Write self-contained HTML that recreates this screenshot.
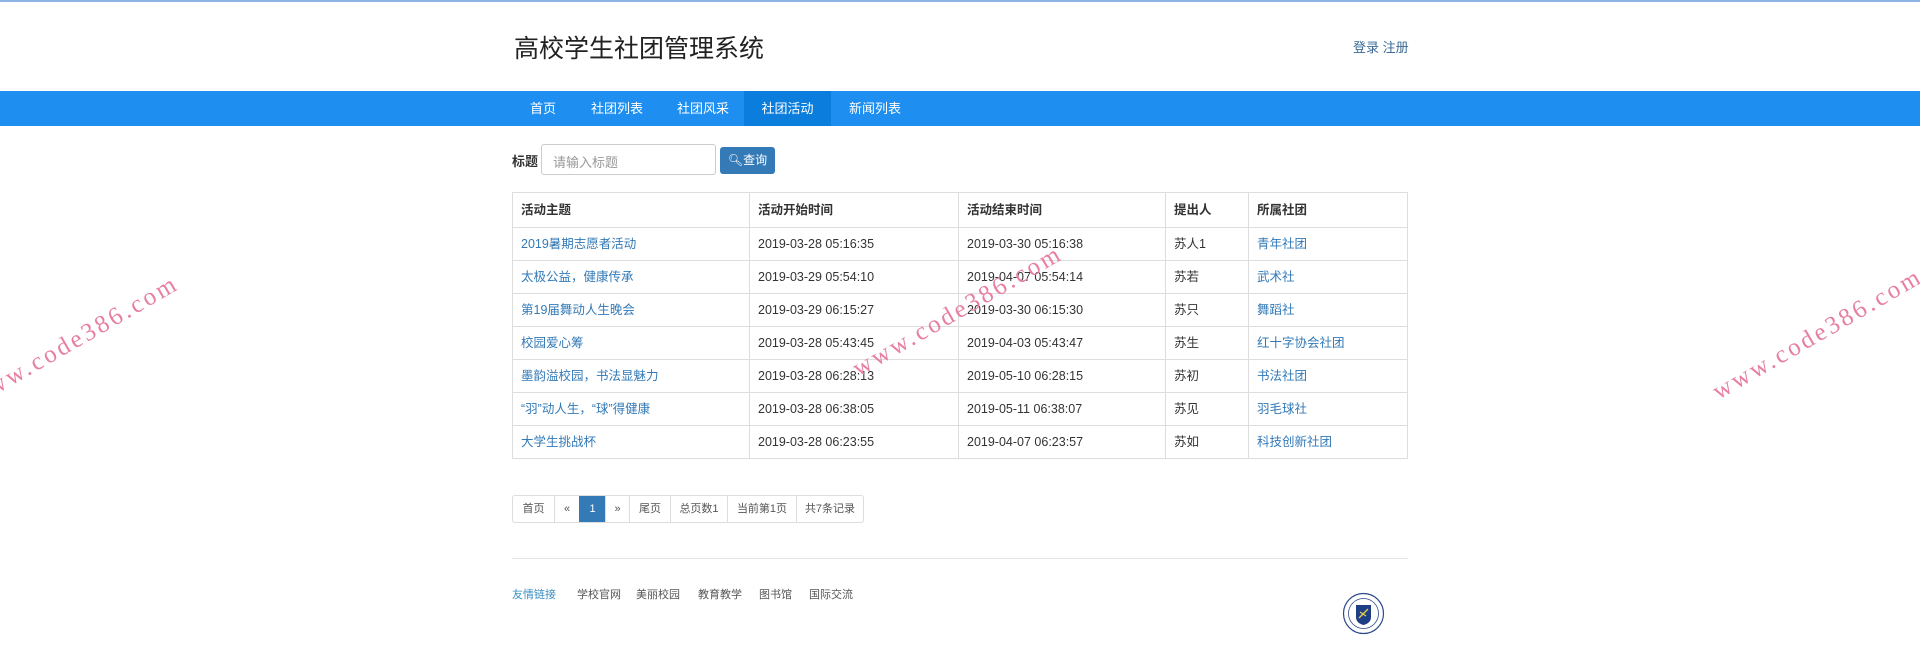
<!DOCTYPE html>
<html><head><meta charset="utf-8"><style>
*{box-sizing:border-box;margin:0;padding:0}
body{width:1920px;height:669px;overflow:hidden;background:#fff;font-family:"Liberation Sans","Noto Sans CJK SC",sans-serif;font-size:13px;color:#333;position:relative}
.topline{position:absolute;left:0;top:0;width:1920px;height:2px;background:#8db4e2}
.title{position:absolute;left:514px;top:29px;font-size:25px;color:#222}
.login{position:absolute;left:1353px;top:37px;font-size:13px;color:#3a6b96}
.nav{position:absolute;left:0;top:91px;width:1920px;height:35px;background:#1e8ff0}
.nav span{position:absolute;top:0;height:35px;line-height:35px;color:#fff;font-size:13px}
.nav .act{background:#0b7ddd;text-align:center}
.lbl{position:absolute;left:512px;top:151px;font-weight:bold;font-size:13px}
.inp{position:absolute;left:541px;top:144px;width:175px;height:31px;border:1px solid #ccc;border-radius:3px;color:#999;padding:7px 11px;font-size:13px}
.btn{position:absolute;left:720px;top:147px;width:55px;height:27px;background:#337ab7;border-radius:3px;color:#fff;font-size:12px;line-height:27px;text-align:center}
table{position:absolute;left:512px;top:192px;width:896px;border-collapse:collapse}
td,th{border:1px solid #ddd;padding:0 8px;text-align:left;font-size:12.5px;height:33px;line-height:14px;font-weight:normal;vertical-align:middle}
th{height:35px;font-weight:bold;color:#333}
td a{color:#337ab7}
.pg{position:absolute;left:512px;top:495px;height:28px;display:flex;border:1px solid #ddd;border-radius:3px;overflow:hidden}
.pg span{height:26px;line-height:26px;font-size:11px;color:#555;border-left:1px solid #ddd;text-align:center}
.pg span:first-child{border-left:none}
.pg .on{background:#337ab7;color:#fff;border-color:#337ab7}
.hr{position:absolute;left:512px;top:558px;width:896px;height:1px;background:#e5e5e5}
.ft{position:absolute;top:586px;font-size:11px;color:#555}
.wm{position:absolute;font-family:"Liberation Serif",serif;font-size:25px;letter-spacing:3px;color:#e77fa2;transform-origin:0 100%;transform:rotate(-30deg);white-space:nowrap}
</style></head><body>
<div class="topline"></div>
<div class="title">高校学生社团管理系统</div>
<div class="login">登录 注册</div>
<div class="nav">
<span style="left:530px">首页</span>
<span style="left:591px">社团列表</span>
<span style="left:677px">社团风采</span>
<span class="act" style="left:744px;width:87px">社团活动</span>
<span style="left:849px">新闻列表</span>
</div>
<div class="lbl">标题</div>
<div class="inp">请输入标题</div>
<div class="btn">&#x1F50D;&#xFE0E;查询</div>
<table>
<tr><th style="width:237px">活动主题</th><th style="width:209px">活动开始时间</th><th style="width:207px">活动结束时间</th><th style="width:83px">提出人</th><th>所属社团</th></tr>
<tr><td><a>2019暑期志愿者活动</a></td><td>2019-03-28 05:16:35</td><td>2019-03-30 05:16:38</td><td>苏人1</td><td><a>青年社团</a></td></tr>
<tr><td><a>太极公益，健康传承</a></td><td>2019-03-29 05:54:10</td><td>2019-04-07 05:54:14</td><td>苏若</td><td><a>武术社</a></td></tr>
<tr><td><a>第19届舞动人生晚会</a></td><td>2019-03-29 06:15:27</td><td>2019-03-30 06:15:30</td><td>苏只</td><td><a>舞蹈社</a></td></tr>
<tr><td><a>校园爱心筹</a></td><td>2019-03-28 05:43:45</td><td>2019-04-03 05:43:47</td><td>苏生</td><td><a>红十字协会社团</a></td></tr>
<tr><td><a>墨韵溢校园，书法显魅力</a></td><td>2019-03-28 06:28:13</td><td>2019-05-10 06:28:15</td><td>苏初</td><td><a>书法社团</a></td></tr>
<tr><td><a>“羽”动人生，“球”得健康</a></td><td>2019-03-28 06:38:05</td><td>2019-05-11 06:38:07</td><td>苏见</td><td><a>羽毛球社</a></td></tr>
<tr><td><a>大学生挑战杯</a></td><td>2019-03-28 06:23:55</td><td>2019-04-07 06:23:57</td><td>苏如</td><td><a>科技创新社团</a></td></tr>
</table>
<div class="pg">
<span style="width:41px">首页</span><span style="width:25px">«</span><span class="on" style="width:26px">1</span><span style="width:24px">»</span><span style="width:41px">尾页</span><span style="width:57px">总页数1</span><span style="width:69px">当前第1页</span><span style="width:67px">共7条记录</span>
</div>
<div class="hr"></div>
<div class="ft" style="left:512px;color:#3a8fc0">友情链接</div>
<div class="ft" style="left:577px">学校官网</div>
<div class="ft" style="left:636px">美丽校园</div>
<div class="ft" style="left:698px">教育教学</div>
<div class="ft" style="left:759px">图书馆</div>
<div class="ft" style="left:809px">国际交流</div>
<svg style="position:absolute;left:1342px;top:592px" width="43" height="43" viewBox="0 0 43 43">
<circle cx="21.5" cy="21.5" r="20" fill="#fff" stroke="#2c4a8a" stroke-width="1.2"/>
<circle cx="21.5" cy="21.5" r="15" fill="none" stroke="#2c4a8a" stroke-width="0.8"/>
<path d="M14 13 H29 V25 Q29 31 21.5 33 Q14 31 14 25 Z" fill="#1f3f85"/>
<path d="M17 26 L26 17 M18 20 L24 24" stroke="#e8d04a" stroke-width="1.3"/>
</svg>
<div class="wm" style="left:-22px;top:385px">www.code386.com</div>
<div class="wm" style="left:862px;top:355px">www.code386.com</div>
<div class="wm" style="left:1722px;top:378px">www.code386.com</div>
</body></html>
